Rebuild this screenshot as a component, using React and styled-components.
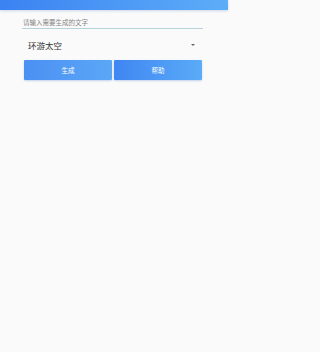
import React, { useState } from "react";
import styled, { createGlobalStyle } from "styled-components";

const GlobalStyle = createGlobalStyle`
  html, body {
    margin: 0;
    padding: 0;
    background: #fafafa;
    font-family: "Noto Sans CJK SC", "Noto Sans", sans-serif;
  }
`;

export default function App() {
  const [text, setText] = useState("");

  return (
    <Root>
      <GlobalStyle />
      <Header />
      <Body>
        <TextInput
          value={text}
          onChange={(e) => setText(e.target.value)}
          placeholder="请输入需要生成的文字"
        />
        <SelectRow>
          <span>环游太空</span>
          <Caret />
        </SelectRow>
        <Buttons>
          <Button $from="#4b90f3" $to="#5ba7f6">生成</Button>
          <Button $from="#3f86f2" $to="#5aabf8">帮助</Button>
        </Buttons>
      </Body>
    </Root>
  );
}

const Root = styled.div`
  width: 228px;
  min-height: 352px;
  background: #fafafa;
`;

const Header = styled.div`
  height: 10px;
  background: linear-gradient(to right, #3b82f2, #5cadf8);
  box-shadow: 0 1px 3px rgba(60, 120, 200, 0.25);
`;

const Body = styled.div`
  padding: 0 25px 0 22px;
  display: flex;
  flex-direction: column;
`;

const TextInput = styled.input`
  margin-top: 5px;
  height: 13px;
  padding: 0 0 0 1px;
  border: none;
  border-bottom: 1px solid #b6d2dd;
  background: transparent;
  font-family: "Noto Sans CJK SC", sans-serif;
  font-size: 6.5px;
  color: #333;
  outline: none;
  &::placeholder {
    color: #858585;
  }
`;

const SelectRow = styled.div`
  height: 31px;
  display: flex;
  align-items: center;
  justify-content: space-between;
  padding: 0 8px 0 6px;
  font-size: 8.5px;
  color: #333;
  span {
    margin-top: 1px;
  }
`;

const Caret = styled.div`
  width: 0;
  height: 0;
  border-left: 2.5px solid transparent;
  border-right: 2.5px solid transparent;
  border-top: 2.5px solid #666;
  margin-top: 1px;
`;

const Buttons = styled.div`
  display: grid;
  grid-template-columns: 1fr 1fr;
  gap: 2px;
  margin: 0 1px 0 2px;
`;

const Button = styled.button`
  height: 20px;
  border: none;
  border-radius: 1px;
  background: linear-gradient(to right, ${(p) => p.$from}, ${(p) => p.$to});
  box-shadow: 0 1px 2px rgba(60, 120, 200, 0.3);
  color: #fff;
  font-family: "Noto Sans CJK SC", sans-serif;
  font-size: 6.5px;
  padding: 0;
`;
